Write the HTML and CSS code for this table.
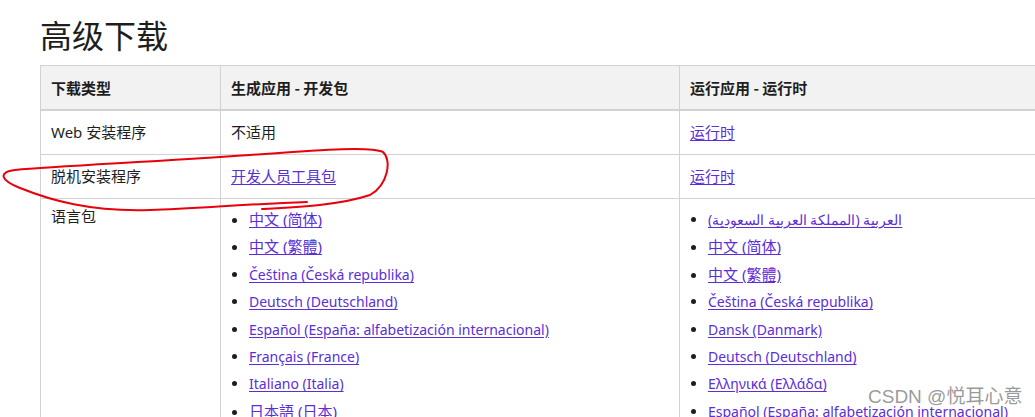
FILE: index.html
```html
<!DOCTYPE html>
<html lang="zh-CN">
<head>
<meta charset="utf-8">
<title>高级下载</title>
<link rel="stylesheet" href="styles.css">
</head>
<body>
<div class="page">
  <h1 class="title">高级下载</h1>
  <table class="dl">
    <colgroup>
      <col class="c1"><col class="c2"><col class="c3">
    </colgroup>
    <thead>
      <tr><th>下载类型</th><th>生成应用 - 开发包</th><th>运行应用 - 运行时</th></tr>
    </thead>
    <tbody>
      <tr><td>Web 安装程序</td><td>不适用</td><td><a href="#">运行时</a></td></tr>
      <tr><td>脱机安装程序</td><td><a href="#">开发人员工具包</a></td><td><a href="#">运行时</a></td></tr>
      <tr class="lang">
        <td>语言包</td>
        <td>
          <ul>
            <li class="zh"><a href="#">中文 (简体)</a></li>
            <li class="zh"><a href="#">中文 (繁體)</a></li>
            <li><a href="#">Čeština (Česká republika)</a></li>
            <li><a href="#">Deutsch (Deutschland)</a></li>
            <li><a href="#">Español (España: alfabetización internacional)</a></li>
            <li><a href="#">Français (France)</a></li>
            <li><a href="#">Italiano (Italia)</a></li>
            <li class="zh"><a href="#">日本語 (日本)</a></li>
          </ul>
        </td>
        <td>
          <ul>
            <li><a href="#">العربية (المملكة العربية السعودية)</a></li>
            <li class="zh"><a href="#">中文 (简体)</a></li>
            <li class="zh"><a href="#">中文 (繁體)</a></li>
            <li><a href="#">Čeština (Česká republika)</a></li>
            <li><a href="#">Dansk (Danmark)</a></li>
            <li><a href="#">Deutsch (Deutschland)</a></li>
            <li><a href="#">Ελληνικά (Ελλάδα)</a></li>
            <li><a href="#">Español (España: alfabetización internacional)</a></li>
          </ul>
        </td>
      </tr>
    </tbody>
  </table>
  <svg class="scribble" width="400" height="230" viewBox="0 0 400 230">
    <path d="M307 202 C250 204 200 208 150 210 C90 212 50 200 20 188 C0 180 -2 172 15 170 C60 166 150 162 250 155 C320 150 370 146 383 152 C392 160 388 185 370 195 C340 205 300 207 262 209" fill="none" stroke="#e8000b" stroke-width="2" stroke-linecap="round"/>
  </svg>
  <div class="mark">CSDN @悦耳心意</div>
</div>
</body>
</html>
```
FILE: styles.css
```css
html, body {
  margin: 0;
  padding: 0;
  background: #fff;
  overflow: hidden;
  width: 1035px;
  height: 417px;
}
.page {
  position: relative;
  padding: 0 0 0 40px;
  font-family: "Noto Sans", "Noto Sans CJK SC", sans-serif;
  color: #1e1e1e;
  font-size: 14px;
}
.title {
  margin: 0;
  padding: 14px 0 0 0;
  height: 65px;
  box-sizing: border-box;
  font-family: "Noto Sans CJK SC", sans-serif;
  font-weight: 400;
  font-size: 32px;
  line-height: 40px;
  color: #1e1e1e;
}
.dl {
  border-collapse: collapse;
  table-layout: fixed;
  width: 1100px;
}
.c1 { width: 180px; }
.c2 { width: 459px; }
.c3 { width: 461px; }
.dl th, .dl td {
  border: 1px solid #d2d2d2;
  text-align: left;
  vertical-align: top;
  padding: 11px 10px;
  line-height: 21px;
  font-size: 15px;
}
.dl th {
  background: #f2f2f2;
  font-weight: 700;
  border-bottom: 2px solid #d2d2d2;
  font-family: "Noto Sans CJK SC", sans-serif;
}
.dl td {
  font-family: "Noto Sans", "Noto Sans CJK SC", sans-serif;
}
.dl a {
  color: #5a2ed8;
  text-decoration: underline;
  text-underline-offset: 2px;
}
.lang td {
  padding-top: 7px;
}
.dl ul {
  margin: 0;
  padding: 0 0 0 18px;
  list-style: disc;
}
.dl li {
  line-height: 27.4px;
  font-size: 14px;
}
.dl li.zh {
  font-size: 15px;
}
.scribble {
  position: absolute;
  left: 0;
  top: 0;
  pointer-events: none;
}
.mark {
  position: absolute;
  left: 868px;
  top: 385px;
  font-family: "Liberation Sans", "Noto Sans CJK SC", sans-serif;
  font-size: 19px;
  line-height: 24px;
  color: rgba(120, 120, 120, 0.75);
  text-shadow: 0 0 2px #fff;
  white-space: nowrap;
}
```
